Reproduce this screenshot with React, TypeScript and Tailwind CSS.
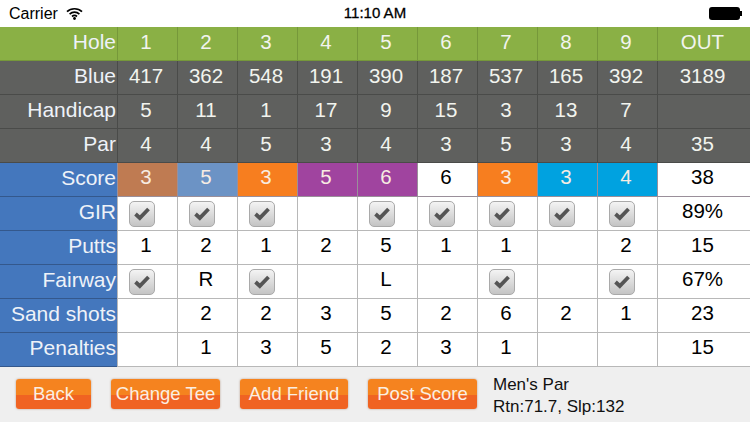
const Check = () => (
  <span className="-ml-[8px] mt-[4px] flex h-[26px] w-[26px] items-center justify-center rounded-[5px] border border-[#a9a9a9] bg-gradient-to-b from-[#f4f4f4] to-[#c4c4c4]">
    <svg width="18" height="15" viewBox="0 0 18 15">
      <path d="M2.5 8 L6.8 12 L15.5 3" fill="none" stroke="#555" strokeWidth="3.8" />
    </svg>
  </span>
);

const holes = ["1", "2", "3", "4", "5", "6", "7", "8", "9"];

type Cell = string | { c: string };
const X: Cell = { c: "check" };

const gridCols = "grid h-[34px] grid-cols-[117px_repeat(9,59px)_92px] grid-rows-[33px] gap-x-px pb-px";

const Row = ({
  label, cells, total, line, cellBg, labelClass, pad, text,
}: { label: string; cells: Cell[]; total: string; line: string; cellBg: string; labelClass: string; pad: string; text: string }) => (
  <div className={`${gridCols} ${line}`}>
    <div className={`flex items-center justify-end pr-px text-[21px] text-[#eef2f8] ${pad} ${labelClass}`}>{label}</div>
    {cells.map((v, i) => (
      <div key={i} className={`flex items-center justify-center pr-[3px] ${pad} ${cellBg} ${text}`}>
        {typeof v === "string" ? v : <Check />}
      </div>
    ))}
    <div className={`flex items-center justify-center pr-[3px] ${pad} ${cellBg} ${text}`}>{total}</div>
  </div>
);

const DarkRow = ({ label, cells, total }: { label: string; cells: Cell[]; total: string }) => (
  <Row label={label} cells={cells} total={total} line="bg-[#4a4b49]" cellBg="bg-[#5f605e]" labelClass="bg-[#5f605e]" pad="pb-[3px]" text="text-[#f2f4ee]" />
);

const WhiteRow = ({ label, cells, total }: { label: string; cells: Cell[]; total: string }) => (
  <Row label={label} cells={cells} total={total} line="bg-[#b8b8b8]" cellBg="bg-white" labelClass="h-[34px] border-b border-[#34588c] bg-[#4477bd]" pad="pb-[4px]" text="text-black" />
);

const Btn = ({ label, w }: { label: string; w: string }) => (
  <button className={`h-[30px] ${w} rounded-[3px] bg-[linear-gradient(#f5831f_0,#f5831f_53%,#f06322_53%,#f06322_100%)] text-center text-[18.5px] leading-[30px] text-[#fbeee2] shadow-[0_0_2px_rgba(120,60,20,0.5)]`}>
    {label}
  </button>
);

const score = [
  ["3", "bg-[#bf7b52]"], ["5", "bg-[#6c93c5]"], ["3", "bg-[#f77e1f]"], ["5", "bg-[#a0449f]"], ["6", "bg-[#a0449f]"],
  ["6", "bg-white"], ["3", "bg-[#f77e1f]"], ["3", "bg-[#00a2e0]"], ["4", "bg-[#00a2e0]"],
];

export default function App() {
  return (
    <div className="flex h-[422px] w-[750px] flex-col overflow-hidden bg-white font-['Liberation_Sans',Arial,sans-serif] text-[20.5px]">
      <div className="relative flex h-[27px] items-center bg-white pl-[9px] text-[16px] text-black">
        <span>Carrier</span>
        <svg className="ml-[8px]" width="17" height="13" viewBox="0 0 17 13">
          <path d="M1 4.6 C5 .8 12 .8 16 4.6 M3.6 7.1 C6.4 4.5 10.6 4.5 13.4 7.1 M6 9.5 C7.5 8.2 9.5 8.2 11 9.5" fill="none" stroke="#000" strokeWidth="1.7" />
          <circle cx="8.5" cy="11.5" r="1.4" fill="#000" />
        </svg>
        <span className="absolute left-0 right-0 text-center text-[15px] [-webkit-text-stroke:0.3px_#000]">11:10 AM</span>
        <span className="absolute right-[8px] top-[7px] flex items-center">
          <span className="h-[13px] w-[31px] rounded-[3px] bg-black" />
          <span className="h-[5px] w-[2px] bg-black" />
        </span>
      </div>
      <Row label="Hole" cells={holes} total="OUT" line="bg-[#76983a]" cellBg="bg-[#8ab045]" labelClass="bg-[#8ab045]" pad="pb-[3px]" text="text-[#f2f4ee]" />
      <DarkRow label="Blue" cells={["417", "362", "548", "191", "390", "187", "537", "165", "392"]} total="3189" />
      <DarkRow label="Handicap" cells={["5", "11", "1", "17", "9", "15", "3", "13", "7"]} total="" />
      <DarkRow label="Par" cells={["4", "4", "5", "3", "4", "3", "5", "3", "4"]} total="35" />
      <div className={`${gridCols} bg-[#9a8f9a]`}>
        <div className="flex h-[34px] items-center justify-end border-b border-[#34588c] bg-[#4477bd] pb-[4px] pr-px text-[21px] text-[#eef2f8]">Score</div>
        {score.map(([v, c], i) => (
          <div key={i} className={`flex items-center justify-center pb-[4px] pr-[3px] ${c} ${c === "bg-white" ? "text-black" : "text-[#f7ece2]"}`}>{v}</div>
        ))}
        <div className="flex items-center justify-center bg-white pb-[4px] pr-[3px] text-black">38</div>
      </div>
      <WhiteRow label="GIR" cells={[X, X, X, "", X, X, X, X, X]} total="89%" />
      <WhiteRow label="Putts" cells={["1", "2", "1", "2", "5", "1", "1", "", "2"]} total="15" />
      <WhiteRow label="Fairway" cells={[X, "R", X, "", "L", "", X, "", X]} total="67%" />
      <WhiteRow label="Sand shots" cells={["", "2", "2", "3", "5", "2", "6", "2", "1"]} total="23" />
      <WhiteRow label="Penalties" cells={["", "1", "3", "5", "2", "3", "1", "", ""]} total="15" />
      <div className="flex flex-1 items-center bg-[#efefef] pb-px pl-[16px]">
        <div className="flex gap-[20px]">
          <Btn label="Back" w="w-[75px]" />
          <Btn label="Change Tee" w="w-[109px]" />
          <Btn label="Add Friend" w="w-[108px]" />
          <Btn label="Post Score" w="w-[109px]" />
        </div>
        <div className="ml-[16px] mt-[3px] text-[17px] leading-[22px] text-[#111]">
          <div>Men's Par</div>
          <div>Rtn:71.7, Slp:132</div>
        </div>
      </div>
    </div>
  );
}
